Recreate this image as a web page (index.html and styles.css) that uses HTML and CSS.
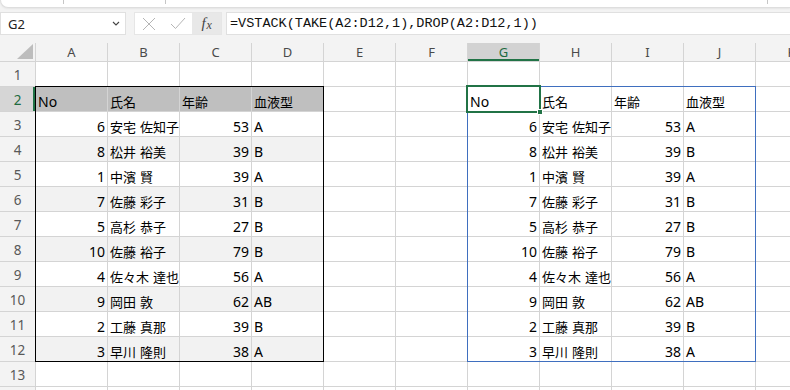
FILE: index.html
```html
<!DOCTYPE html>
<html lang="ja">
<head>
<meta charset="utf-8">
<title>Excel VSTACK</title>
<link rel="stylesheet" href="styles.css">
</head>
<body>
<div class="ribbon">
  <span class="seg s1"></span><span class="seg s2"></span><span class="seg s3"></span>
</div>
<div class="fbar">
  <div class="namebox"><span>G2</span>
    <svg width="8" height="5" viewBox="0 0 8 5"><polyline points="1,1 4,4 7,1" fill="none" stroke="#444" stroke-width="1.1"/></svg>
  </div>
  <div class="btns">
    <span class="btn"><svg width="14" height="14" viewBox="0 0 14 14"><path d="M1 1 L13 13 M13 1 L1 13" stroke="#b5b5b5" stroke-width="1"/></svg></span>
    <span class="btn"><svg width="16" height="13" viewBox="0 0 16 13"><path d="M1 7 L5.5 11.5 L15 1" fill="none" stroke="#b5b5b5" stroke-width="1"/></svg></span>
    <span class="fx"><i>f</i><i class="x">x</i></span>
  </div>
  <div class="finput">=VSTACK(TAKE(A2:D12,1),DROP(A2:D12,1))</div>
</div>
<div class="sheet">
  <div class="ch corner"><svg width="16" height="15" viewBox="0 0 16 15"><polygon points="16,0 16,15 0,15" fill="#bdbdbd"/></svg></div>
  <div class="ch">A</div><div class="ch">B</div><div class="ch">C</div><div class="ch">D</div><div class="ch">E</div><div class="ch">F</div><div class="ch sel">G</div><div class="ch">H</div><div class="ch">I</div><div class="ch">J</div><div class="ch">K</div>

  <div class="rh">1</div>
  <div class="c"></div><div class="c"></div><div class="c"></div><div class="c"></div><div class="c"></div><div class="c"></div><div class="c"></div><div class="c"></div><div class="c"></div><div class="c"></div><div class="c"></div>

  <div class="rh rsel">2</div>
  <div class="c hd">No</div><div class="c hd j">氏名</div><div class="c hd j">年齢</div><div class="c hd j">血液型</div><div class="c"></div><div class="c"></div>
  <div class="c">No</div><div class="c j">氏名</div><div class="c j">年齢</div><div class="c j">血液型</div><div class="c"></div>

  <div class="rh">3</div>
  <div class="c n">6</div><div class="c j">安宅 佐知子</div><div class="c n">53</div><div class="c">A</div><div class="c"></div><div class="c"></div>
  <div class="c n">6</div><div class="c j">安宅 佐知子</div><div class="c n">53</div><div class="c">A</div><div class="c"></div>

  <div class="rh">4</div>
  <div class="c n alt">8</div><div class="c j alt">松井 裕美</div><div class="c n alt">39</div><div class="c alt">B</div><div class="c"></div><div class="c"></div>
  <div class="c n">8</div><div class="c j">松井 裕美</div><div class="c n">39</div><div class="c">B</div><div class="c"></div>

  <div class="rh">5</div>
  <div class="c n">1</div><div class="c j">中濱 賢</div><div class="c n">39</div><div class="c">A</div><div class="c"></div><div class="c"></div>
  <div class="c n">1</div><div class="c j">中濱 賢</div><div class="c n">39</div><div class="c">A</div><div class="c"></div>

  <div class="rh">6</div>
  <div class="c n alt">7</div><div class="c j alt">佐藤 彩子</div><div class="c n alt">31</div><div class="c alt">B</div><div class="c"></div><div class="c"></div>
  <div class="c n">7</div><div class="c j">佐藤 彩子</div><div class="c n">31</div><div class="c">B</div><div class="c"></div>

  <div class="rh">7</div>
  <div class="c n">5</div><div class="c j">高杉 恭子</div><div class="c n">27</div><div class="c">B</div><div class="c"></div><div class="c"></div>
  <div class="c n">5</div><div class="c j">高杉 恭子</div><div class="c n">27</div><div class="c">B</div><div class="c"></div>

  <div class="rh">8</div>
  <div class="c n alt">10</div><div class="c j alt">佐藤 裕子</div><div class="c n alt">79</div><div class="c alt">B</div><div class="c"></div><div class="c"></div>
  <div class="c n">10</div><div class="c j">佐藤 裕子</div><div class="c n">79</div><div class="c">B</div><div class="c"></div>

  <div class="rh">9</div>
  <div class="c n">4</div><div class="c j">佐々木 達也</div><div class="c n">56</div><div class="c">A</div><div class="c"></div><div class="c"></div>
  <div class="c n">4</div><div class="c j">佐々木 達也</div><div class="c n">56</div><div class="c">A</div><div class="c"></div>

  <div class="rh">10</div>
  <div class="c n alt">9</div><div class="c j alt">岡田 敦</div><div class="c n alt">62</div><div class="c alt">AB</div><div class="c"></div><div class="c"></div>
  <div class="c n">9</div><div class="c j">岡田 敦</div><div class="c n">62</div><div class="c">AB</div><div class="c"></div>

  <div class="rh">11</div>
  <div class="c n">2</div><div class="c j">工藤 真那</div><div class="c n">39</div><div class="c">B</div><div class="c"></div><div class="c"></div>
  <div class="c n">2</div><div class="c j">工藤 真那</div><div class="c n">39</div><div class="c">B</div><div class="c"></div>

  <div class="rh">12</div>
  <div class="c n alt">3</div><div class="c j alt">早川 隆則</div><div class="c n alt">38</div><div class="c alt">A</div><div class="c"></div><div class="c"></div>
  <div class="c n">3</div><div class="c j">早川 隆則</div><div class="c n">38</div><div class="c">A</div><div class="c"></div>

  <div class="rh">13</div>
  <div class="c"></div><div class="c"></div><div class="c"></div><div class="c"></div><div class="c"></div><div class="c"></div><div class="c"></div><div class="c"></div><div class="c"></div><div class="c"></div><div class="c"></div>

  <div class="rh"></div>
  <div class="c"></div><div class="c"></div><div class="c"></div><div class="c"></div><div class="c"></div><div class="c"></div><div class="c"></div><div class="c"></div><div class="c"></div><div class="c"></div><div class="c"></div>

  <div class="outline-left"></div>
  <div class="outline-right"></div>
  <div class="selection"><span class="handle"></span></div>
</div>
</body>
</html>
```
FILE: styles.css
```css
* { box-sizing: border-box; }
html, body { margin: 0; padding: 0; }
body {
  width: 790px;
  height: 390px;
  overflow: hidden;
  background: #f3f3f3;
  font-family: "Noto Sans", "Noto Sans CJK JP", sans-serif;
  color: #000;
}

/* ribbon edge */
.ribbon {
  height: 8px;
  background: #fff;
  border: 1px solid #dedede;
  border-top: none;
  border-right: none;
  border-radius: 0 0 0 8px;
  box-shadow: 0 1px 2px rgba(0,0,0,0.06);
  display: flex;
  align-items: flex-start;
}
.seg { display: block; height: 4px; border-right: 1px solid #c6c6c6; }
.s1 { width: 63px; }
.s2 { width: 102px; }
.s3 { width: 602px; }

/* formula bar */
.fbar {
  display: flex;
  height: 23px;
  margin-top: 4px;
}
.namebox {
  width: 126px;
  background: #fff;
  border: 1px solid #e0e0e0;
  display: flex;
  align-items: center;
  justify-content: space-between;
  padding: 0 5px 0 7px;
  font-size: 13px;
  color: #222;
}
.btns {
  margin-left: 8px;
  width: 88px;
  background: #fff;
  border: 1px solid #e6e6e6;
  display: flex;
}
.btn {
  width: 29px;
  display: flex;
  align-items: center;
  justify-content: center;
}
.fx {
  width: 29px;
  background: #e8e8e8;
  display: flex;
  align-items: center;
  justify-content: center;
  font-family: "Liberation Serif", serif;
  font-size: 15px;
  color: #444;
}
.fx .x { font-size: 12px; margin-left: 1px; margin-top: 3px; }
.finput {
  margin-left: 4px;
  flex: 1;
  background: #fff;
  border: 1px solid #e0e0e0;
  border-right: none;
  font-family: "Liberation Mono", monospace;
  font-size: 13.5px;
  line-height: 21px;
  padding-left: 3px;
  white-space: nowrap;
  color: #111;
}

/* sheet */
.sheet {
  margin-top: 8px;
  position: relative;
  display: grid;
  grid-template-columns: 36px repeat(11, 72px);
  grid-template-rows: 19px;
  grid-auto-rows: 25px;
  background: #fff;
}
.ch {
  background: #f3f3f3;
  border-right: 1px solid #d4d4d4;
  border-bottom: 1px solid #d4d4d4;
  display: flex;
  align-items: center;
  justify-content: center;
  font-size: 13px;
  color: #4a4a4a;
}
.ch.corner { justify-content: flex-end; align-items: flex-end; padding: 0 2px 2px 0; }
.ch.sel {
  background: #d2d2d2;
  color: #1e6b40;
  box-shadow: inset 0 -2px 0 #217346;
}
.rh {
  background: #f3f3f3;
  border-right: 1px solid #d4d4d4;
  border-bottom: 1px solid #d4d4d4;
  display: flex;
  align-items: center;
  justify-content: center;
  padding-top: 2px;
  font-size: 13.5px;
  color: #595959;
}
.rh.rsel {
  background: #d6d6d6;
  color: #1e6b40;
  box-shadow: inset -2px 0 0 #217346;
}
.c {
  border-right: 1px solid #d4d4d4;
  border-bottom: 1px solid #d4d4d4;
  display: flex;
  align-items: flex-end;
  padding: 0 2px 1px 2px;
  font-size: 14px;
  line-height: 16px;
  white-space: nowrap;
  overflow: hidden;
}
.c.n { justify-content: flex-end; }
.c.j { font-family: "Noto Sans CJK JP", sans-serif; font-size: 13px; word-spacing: 1px; }
.c.hd { background: #bfbfbf; }
.c.alt { background: #f2f2f2; }

.outline-left, .outline-right, .selection {
  position: absolute;
  pointer-events: none;
}
.outline-left {
  grid-row: 3 / 14;
  grid-column: 2 / 6;
  top: -1px; left: -1px; right: 0; bottom: 0;
  border: 1px solid #000;
}
.outline-right {
  grid-row: 3 / 14;
  grid-column: 8 / 12;
  top: -1px; left: -1px; right: 0; bottom: 0;
  border: 1px solid #3f6fbf;
}
.selection {
  grid-row: 3 / 4;
  grid-column: 8 / 9;
  top: -2px; left: -2px; right: -1px; bottom: -1px;
  border: 2px solid #217346;
}
.handle {
  position: absolute;
  right: -4px;
  bottom: -4px;
  width: 6px;
  height: 6px;
  background: #217346;
  border: 1px solid #fff;
}
```
